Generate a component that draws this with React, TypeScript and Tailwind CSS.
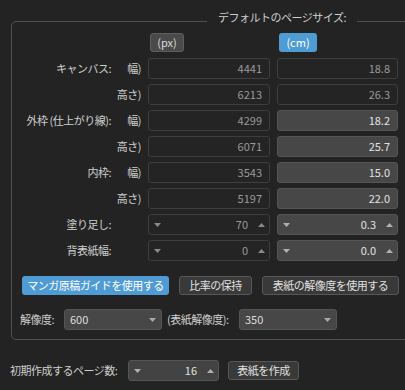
import React from "react";

const font = { fontFamily: '"Noto Sans CJK JP", "Noto Sans", sans-serif' };

function Down({ c = "#9a9a9a" }: { c?: string }) {
  return (
    <svg width="7" height="4" viewBox="0 0 7 4" className="shrink-0">
      <polygon points="0,0 7,0 3.5,4" fill={c} />
    </svg>
  );
}
function Up({ c = "#9a9a9a" }: { c?: string }) {
  return (
    <svg width="7" height="4" viewBox="0 0 7 4" className="shrink-0">
      <polygon points="0,4 7,4 3.5,0" fill={c} />
    </svg>
  );
}

function Field({ v, light }: { v: string; light?: boolean }) {
  return (
    <div
      className={
        "h-[21px] rounded-[3px] border flex items-center justify-end pr-[7px] text-[11px] " +
        (light
          ? "bg-[#474747] border-[#555555] text-[#e2e2e2]"
          : "bg-[#242424] border-[#3e3e3e] text-[#9a9a9a]")
      }
    >
      {v}
    </div>
  );
}

function Spin({ v, light }: { v: string; light?: boolean }) {
  return (
    <div
      className={
        "h-[21px] rounded-[3px] border flex items-center pl-[5px] pr-[4px] text-[11px] " +
        (light
          ? "bg-[#474747] border-[#555555] text-[#e2e2e2]"
          : "bg-[#242424] border-[#3e3e3e] text-[#9a9a9a]")
      }
    >
      <Down c={light ? "#b0b0b0" : "#8a8a8a"} />
      <span className="flex-1 text-right pr-[10px]">{v}</span>
      <Up c={light ? "#b0b0b0" : "#8a8a8a"} />
    </div>
  );
}

function Label({ main, sub }: { main?: string; sub?: string }) {
  return (
    <div className="h-[21px] flex items-center justify-end text-[11px] tracking-[-0.5px] text-[#cfcfcf]">
      <span>{main}</span>
      <span className="w-[30px] text-right">{sub}</span>
    </div>
  );
}

export default function App() {
  const rows: { main?: string; sub?: string; px: string; cm: string; light: boolean; spin?: boolean }[] = [
    { main: "キャンバス:", sub: "幅)", px: "4441", cm: "18.8", light: false },
    { sub: "高さ)", px: "6213", cm: "26.3", light: false },
    { main: "外枠 (仕上がり線):", sub: "幅)", px: "4299", cm: "18.2", light: true },
    { sub: "高さ)", px: "6071", cm: "25.7", light: true },
    { main: "内枠:", sub: "幅)", px: "3543", cm: "15.0", light: true },
    { sub: "高さ)", px: "5197", cm: "22.0", light: true },
    { main: "塗り足し:", px: "70", cm: "0.3", light: true, spin: true },
    { main: "背表紙幅:", px: "0", cm: "0.0", light: true, spin: true },
  ];

  return (
    <div style={font} className="w-[405px] h-[390px] bg-[#232323] overflow-hidden flex flex-col">
      <div className="relative ml-[11px] mt-[21px] w-[400px] border border-[#505050] rounded-[5px] flex flex-col">
        <span className="absolute left-[195px] top-[-13px] px-[11px] bg-[#232323] leading-[16px] text-[11px] tracking-[-0.5px] text-[#d0d0d0]">
          デフォルトのページサイズ:
        </span>

        <div className="grid grid-cols-[129px_122px_121px] gap-x-[7px] mt-[11px]">
          <div />
          <div className="pl-[2px]">
            <div className="w-[34px] h-[19px] rounded-[3px] bg-[#4a4a4a] border border-[#5e5e5e] text-[#dcdcdc] text-[11px] flex items-center justify-center">
              (px)
            </div>
          </div>
          <div className="pl-[2px]">
            <div className="w-[38px] h-[19px] rounded-[3px] bg-[#4f9bd4] text-white text-[11px] flex items-center justify-center">
              (cm)
            </div>
          </div>
        </div>

        <div className="grid grid-cols-[129px_122px_121px] gap-x-[7px] gap-y-[5px] mt-[6px]">
          {rows.map((r, i) => (
            <React.Fragment key={i}>
              <Label main={r.main} sub={r.sub} />
              {r.spin ? <Spin v={r.px} /> : <Field v={r.px} />}
              {r.spin ? <Spin v={r.cm} light /> : <Field v={r.cm} light={r.light} />}
            </React.Fragment>
          ))}
        </div>

        <div className="flex gap-[10px] ml-[10px] mt-[15px] text-[11px] tracking-[-0.5px]">
          <div className="w-[147px] h-[19px] rounded-[3px] bg-[#4f9bd4] text-white flex items-center justify-center">
            マンガ原稿ガイドを使用する
          </div>
          <div className="w-[73px] h-[19px] rounded-[3px] bg-[#393939] border border-[#575757] text-[#e0e0e0] flex items-center justify-center">
            比率の保持
          </div>
          <div className="w-[137px] h-[19px] rounded-[3px] bg-[#393939] border border-[#575757] text-[#e0e0e0] flex items-center justify-center">
            表紙の解像度を使用する
          </div>
        </div>

        <div className="flex items-center ml-[8px] mt-[14px] mb-[9px] text-[11px] text-[#cfcfcf]">
          <span className="w-[44px] tracking-[-0.5px]">解像度:</span>
          <div className="w-[98px] h-[21px] rounded-[3px] bg-[#474747] border border-[#555555] flex items-center pl-[5px] pr-[5px] text-[#dedede]">
            <span className="flex-1">600</span>
            <Down c="#aaaaaa" />
          </div>
          <span className="w-[77px] pl-[5px] tracking-[-0.5px]">(表紙解像度):</span>
          <div className="w-[98px] h-[21px] rounded-[3px] bg-[#474747] border border-[#555555] flex items-center pl-[5px] pr-[5px] text-[#dedede]">
            <span className="flex-1">350</span>
            <Down c="#aaaaaa" />
          </div>
        </div>
      </div>

      <div className="flex items-center ml-[10px] mt-[20px] text-[11px] text-[#cfcfcf]">
        <span className="w-[118px] tracking-[-0.5px]">初期作成するページ数:</span>
        <div className="w-[91px] h-[21px] rounded-[3px] bg-[#434343] border border-[#555555] flex items-center pl-[5px] pr-[4px] text-[#e2e2e2]">
          <Down c="#b0b0b0" />
          <span className="flex-1 text-right pr-[10px]">16</span>
          <Up c="#b0b0b0" />
        </div>
        <div className="ml-[9px] w-[71px] h-[19px] rounded-[3px] bg-[#393939] border border-[#575757] text-[#e0e0e0] flex items-center justify-center tracking-[-0.5px]">
          表紙を作成
        </div>
      </div>
    </div>
  );
}
